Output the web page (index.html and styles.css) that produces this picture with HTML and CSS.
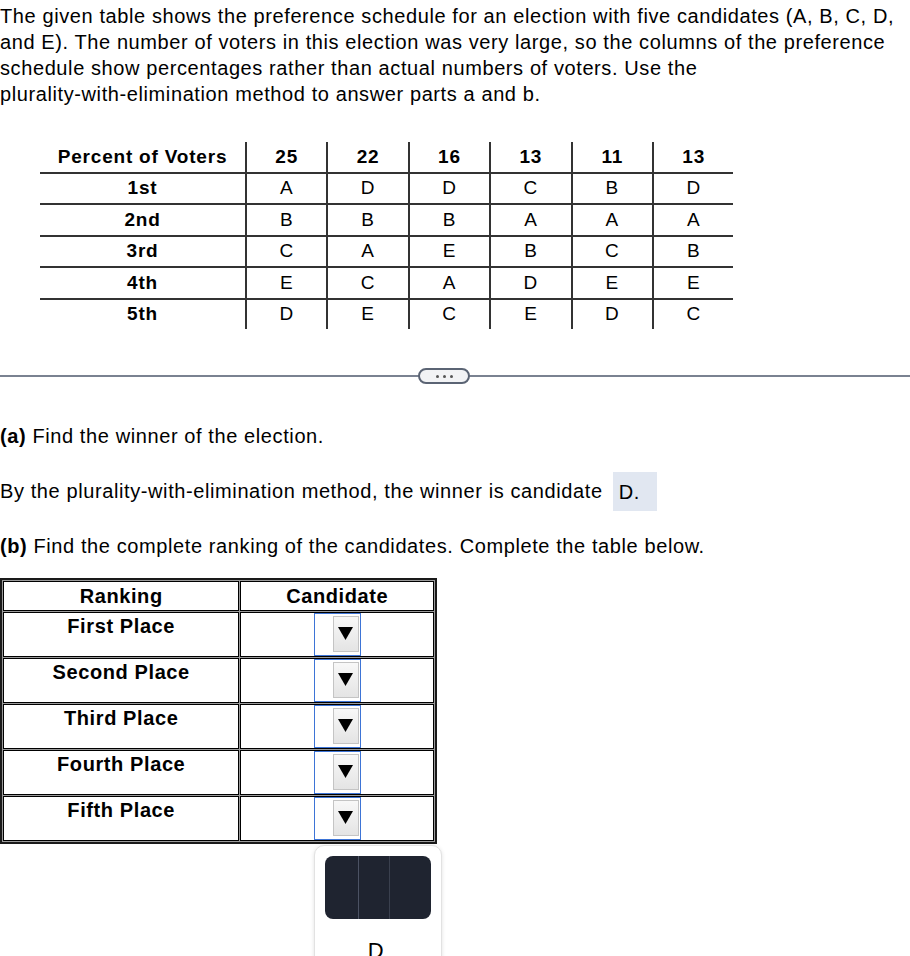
FILE: index.html
```html
<!DOCTYPE html>
<html>
<head>
<meta charset="utf-8">
<link rel="stylesheet" href="styles.css">
</head>
<body>
<p class="intro">The given table shows the preference schedule for an election with five candidates (A, B, C, D, and E). The number of voters in this election was very large, so the columns of the preference schedule show percentages rather than actual numbers of voters. Use the <span class="nw">plurality-with-elimination</span> method to answer parts a and b.</p>

<table class="pref">
  <thead>
    <tr><th class="lbl">Percent of Voters</th><th>25</th><th>22</th><th>16</th><th>13</th><th>11</th><th>13</th></tr>
  </thead>
  <tbody>
    <tr><th class="lbl">1st</th><td>A</td><td>D</td><td>D</td><td>C</td><td>B</td><td>D</td></tr>
    <tr><th class="lbl">2nd</th><td>B</td><td>B</td><td>B</td><td>A</td><td>A</td><td>A</td></tr>
    <tr><th class="lbl">3rd</th><td>C</td><td>A</td><td>E</td><td>B</td><td>C</td><td>B</td></tr>
    <tr><th class="lbl">4th</th><td>E</td><td>C</td><td>A</td><td>D</td><td>E</td><td>E</td></tr>
    <tr><th class="lbl">5th</th><td>D</td><td>E</td><td>C</td><td>E</td><td>D</td><td>C</td></tr>
  </tbody>
</table>

<div class="divider"><span class="pill"><i></i><i></i><i></i></span></div>

<p class="q"><b>(a)</b> Find the winner of the election.</p>
<p class="q ans">By the <span class="nw">plurality-with-elimination</span> method, the winner is candidate <span class="box">D.</span></p>
<p class="q"><b>(b)</b> Find the complete ranking of the candidates. Complete the table below.</p>

<div class="rank-wrap">
  <table class="rank">
    <tr class="head"><th class="c1">Ranking</th><th class="c2">Candidate</th></tr>
    <tr><th class="c1">First Place</th><td class="c2"><span class="select"><span class="btn"><svg width="15" height="13" viewBox="0 0 15 13"><polygon points="0,0 15,0 7.5,13" fill="#000"/></svg></span></span></td></tr>
    <tr><th class="c1">Second Place</th><td class="c2"><span class="select"><span class="btn"><svg width="15" height="13" viewBox="0 0 15 13"><polygon points="0,0 15,0 7.5,13" fill="#000"/></svg></span></span></td></tr>
    <tr><th class="c1">Third Place</th><td class="c2"><span class="select"><span class="btn"><svg width="15" height="13" viewBox="0 0 15 13"><polygon points="0,0 15,0 7.5,13" fill="#000"/></svg></span></span></td></tr>
    <tr><th class="c1">Fourth Place</th><td class="c2"><span class="select"><span class="btn"><svg width="15" height="13" viewBox="0 0 15 13"><polygon points="0,0 15,0 7.5,13" fill="#000"/></svg></span></span></td></tr>
    <tr class="last"><th class="c1">Fifth Place</th><td class="c2"><span class="select"><span class="btn"><svg width="15" height="13" viewBox="0 0 15 13"><polygon points="0,0 15,0 7.5,13" fill="#000"/></svg></span></span></td></tr>
  </table>
  <div class="menu">
    <div class="toolbar"><span class="seg s1"></span><span class="seg s2"></span><span class="seg s3"></span></div>
    <div class="opt">D</div>
  </div>
</div>
</body>
</html>
```

FILE: styles.css
```css
html, body {
  margin: 0;
  padding: 0;
  background: #fff;
}
body {
  font-family: "Liberation Sans", Arial, sans-serif;
  color: #000;
  width: 910px;
  height: 956px;
  overflow: hidden;
  letter-spacing: 0.6px;
}
.nw {
  white-space: nowrap;
}
.intro {
  margin: 3px 0 0 0;
  font-size: 20px;
  line-height: 26px;
  padding-right: 6px;
}
.pref {
  margin: 35px 0 0 40px;
  border-collapse: collapse;
  font-size: 19px;
  letter-spacing: 0.8px;
}
.pref th, .pref td {
  padding: 0;
  text-align: center;
  width: 79.4px;
  height: 29.5px;
  border-left: 2px solid #333;
  font-weight: normal;
}
.pref thead th {
  font-weight: bold;
}
.pref th.lbl {
  width: 205px;
  border-left: none;
  font-weight: bold;
}
.pref tr {
  border-bottom: 2px solid #333;
}
.pref tbody tr:last-child {
  border-bottom: none;
}
.divider {
  margin-top: 39px;
  height: 16px;
  display: flex;
  align-items: center;
  justify-content: center;
  position: relative;
}
.divider::before {
  content: "";
  position: absolute;
  left: 0;
  right: 0;
  top: 7px;
  height: 2px;
  background: #7a8291;
}
.pill {
  position: relative;
  width: 48px;
  height: 12px;
  border: 2px solid #5b6474;
  border-radius: 9px;
  background: #f2f3f5;
  display: flex;
  align-items: center;
  justify-content: center;
  gap: 4px;
  margin-left: -22px;
}
.pill i {
  width: 3px;
  height: 3px;
  border-radius: 50%;
  background: #555;
}
.q {
  margin: 0;
  font-size: 20px;
  line-height: 26px;
}
.divider + .q {
  margin-top: 39px;
}
.ans {
  margin-top: 29px;
}
.box {
  background: #e1e7f1;
  padding: 8.5px 17px 8.5px 6px;
  margin-left: 4px;
}
.ans + .q {
  margin-top: 29px;
}
.rank-wrap {
  position: relative;
  margin-top: 19px;
}
.rank {
  border: 2px solid #1a1a1a;
  border-spacing: 1px;
  background: #9a9a9a;
  font-size: 20px;
  width: 437px;
}
.rank th, .rank td {
  background: #fff;
  border: 1px solid #000;
  padding: 0;
  vertical-align: top;
  text-align: center;
  line-height: 26px;
}
.rank .c1 {
  width: 235px;
}
.rank .c2 {
  width: 192px;
}
.rank tr td, .rank tr th {
  height: 41px;
}
.rank tr.head th {
  height: 27px;
  line-height: 28px;
}
.rank tr.last td, .rank tr.last th {
  height: 43px;
}
.select {
  display: inline-block;
  width: 45px;
  height: 41px;
  border: 1px solid #3d74d6;
  background: #fff;
  position: relative;
  margin-top: 0;
  vertical-align: top;
  letter-spacing: 0;
}
.btn {
  position: absolute;
  right: 1px;
  top: 2px;
  width: 24px;
  height: 34px;
  border: 1px solid #c4c4c4;
  background: linear-gradient(#f8f8f8, #e4e4e4);
  display: flex;
  align-items: center;
  justify-content: center;
}
.btn svg {
  display: block;
  margin-top: -1px;
}
.menu {
  position: absolute;
  left: 314px;
  top: 267px;
  width: 126px;
  height: 150px;
  background: #fff;
  border: 1px solid #e2e2e2;
  border-radius: 10px;
  box-shadow: 0 1px 4px rgba(0,0,0,0.12);
}
.toolbar {
  display: flex;
  margin: 10px 10px 0 10px;
  height: 63px;
  background: #1f2430;
  border-radius: 8px;
  overflow: hidden;
}
.seg {
  height: 100%;
}
.s1 { width: 33px; border-right: 1px solid #4b5263; }
.s2 { width: 30px; border-right: 1px solid #3a404e; }
.s3 { flex: 1; }
.opt {
  text-align: center;
  font-size: 22px;
  line-height: 26px;
  margin-top: 19px;
  padding-right: 4px;
}
```
